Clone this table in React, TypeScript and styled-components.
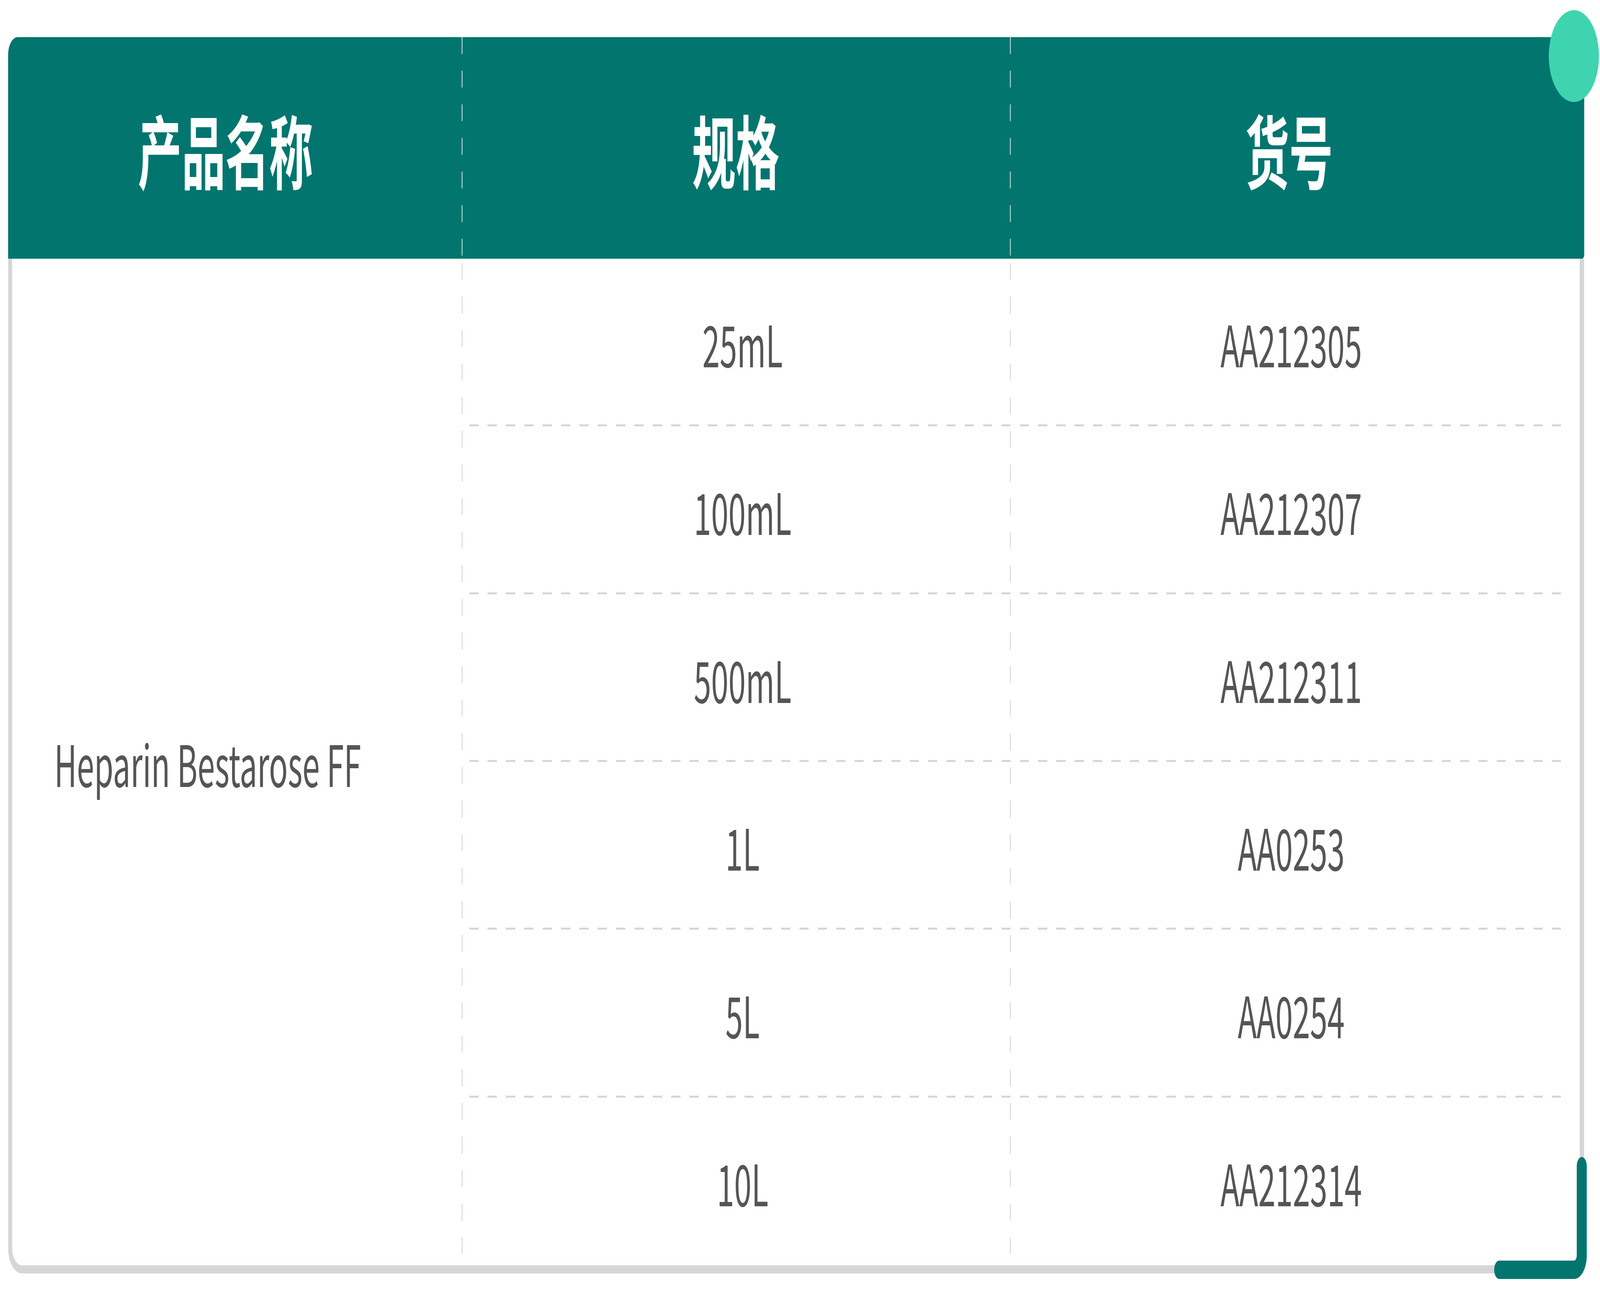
import React, { useEffect, useState } from 'react';
import styled, { createGlobalStyle } from 'styled-components';

const TEAL = '#02756f';
const LINE = '#d6d6d6';
const DESIGN_W = 7500;
const DESIGN_H = 3355;

const GlobalStyle = createGlobalStyle`
  html, body {
    margin: 0;
    padding: 0;
    background: #fff;
    overflow: hidden;
  }
  body {
    font-family: 'Noto Sans CJK SC', 'Noto Sans', sans-serif;
  }
`;

interface Item {
  spec: string;
  code: string;
}

const items: Item[] = [
  { spec: '25mL', code: 'AA212305' },
  { spec: '100mL', code: 'AA212307' },
  { spec: '500mL', code: 'AA212311' },
  { spec: '1L', code: 'AA0253' },
  { spec: '5L', code: 'AA0254' },
  { spec: '10L', code: 'AA212314' }
];

// the drawing is laid out at 7500x3355 and fitted to whatever window it gets
function useStageScale() {
  const read = () => ({
    x: window.innerWidth / DESIGN_W,
    y: window.innerHeight / DESIGN_H
  });
  const [scale, setScale] = useState(read);
  useEffect(() => {
    const onResize = () => setScale(read());
    window.addEventListener('resize', onResize);
    return () => window.removeEventListener('resize', onResize);
  }, []);
  return scale;
}

export default function App() {
  const scale = useStageScale();

  return (
    <>
      <GlobalStyle />
      <Viewport>
        <Stage style={{ transform: `scale(${scale.x}, ${scale.y})` }}>
          <Card>
            <Header>
              <HeadCell $padRight={88}>产品名称</HeadCell>
              <HeadCell $divider>规格</HeadCell>
              <HeadCell $divider $padRight={74}>
                货号
              </HeadCell>
            </Header>
            <Body>
              <NameCell>Heparin Bestarose FF</NameCell>
              <RowList>
                {items.map((item, index) => (
                  <Row key={item.code} $last={index === items.length - 1}>
                    <SpecCell>{item.spec}</SpecCell>
                    <CodeCell>{item.code}</CodeCell>
                  </Row>
                ))}
              </RowList>
            </Body>
            {/* decorative dot and corner bracket */}
            <Dot />
            <Bracket viewBox="0 0 434 312">
              <path
                d="M 23.5 288.5 H 374 A 36.5 36.5 0 0 0 410.5 252 V 23.5"
                fill="none"
                stroke={TEAL}
                strokeWidth="47"
                strokeLinecap="round"
              />
            </Bracket>
          </Card>
        </Stage>
      </Viewport>
    </>
  );
}

const Viewport = styled.div`
  width: 100vw;
  height: 100vh;
  overflow: hidden;
`;

const Stage = styled.div`
  width: ${DESIGN_W}px;
  height: ${DESIGN_H}px;
  box-sizing: border-box;
  padding: 95px 0 0 38px;
  transform-origin: 0 0;
`;

const Card = styled.div`
  position: relative;
  width: 7388px;
  display: flex;
  flex-direction: column;
`;

const Header = styled.div`
  display: grid;
  grid-template-columns: 2126px 2570px 1fr;
  height: 567px;
  background: ${TEAL};
  border-radius: 45px 0 10px 0;
`;

const HeadCell = styled.div<{ $divider?: boolean; $padRight?: number }>`
  display: flex;
  align-items: center;
  justify-content: center;
  padding-right: ${(p) => p.$padRight ?? 0}px;
  color: #fff;
  font-size: 205px;
  font-weight: 700;
  line-height: 1;
  ${(p) =>
    p.$divider &&
    `
    background-image: repeating-linear-gradient(
      to bottom,
      rgba(255, 255, 255, 0.75) 0 43px,
      transparent 43px 86px
    );
    background-size: 4px 100%;
    background-repeat: no-repeat;
    background-position: 0 0;
  `}
`;

const Body = styled.div`
  display: flex;
  height: 2597px;
  box-sizing: border-box;
  border-left: 19px solid ${LINE};
  border-right: 21px solid ${LINE};
  border-bottom: 21px solid ${LINE};
  border-bottom-left-radius: 65px;
  border-bottom-right-radius: 40px;
  background: #fff;
`;

const NameCell = styled.div`
  width: 2107px;
  flex-shrink: 0;
  display: flex;
  align-items: center;
  box-sizing: border-box;
  padding-left: 197px;
  color: #555;
  font-size: 146px;
`;

const RowList = styled.div`
  flex: 1;
  display: flex;
  flex-direction: column;
  background-image: repeating-linear-gradient(
      to bottom,
      ${LINE} 0 43px,
      transparent 43px 86px
    ),
    repeating-linear-gradient(to bottom, ${LINE} 0 43px, transparent 43px 86px);
  background-size: 4px calc(100% - 40px), 4px calc(100% - 40px);
  background-position: 0 11px, 2570px 11px;
  background-repeat: no-repeat;
`;

const Row = styled.div<{ $last?: boolean }>`
  flex: 1;
  display: grid;
  grid-template-columns: 2570px 1fr;
  ${(p) =>
    !p.$last &&
    `
    background-image: repeating-linear-gradient(
      to right,
      ${LINE} 0 43px,
      transparent 43px 86px
    );
    background-size: 5140px 5px;
    background-position: 36px 100%;
    background-repeat: no-repeat;
  `}
`;

const SpecCell = styled.div`
  display: flex;
  align-items: center;
  justify-content: center;
  padding-left: 64px;
  color: #555;
  font-size: 146px;
`;

const CodeCell = styled.div`
  display: flex;
  align-items: center;
  justify-content: center;
  padding-right: 34px;
  color: #555;
  font-size: 146px;
`;

const Dot = styled.div`
  position: absolute;
  top: -69px;
  right: -69px;
  width: 235px;
  height: 235px;
  border-radius: 50%;
  background: #3ed4af;
`;

const Bracket = styled.svg`
  position: absolute;
  right: -12px;
  bottom: -14px;
  width: 434px;
  height: 312px;
  display: block;
`;
